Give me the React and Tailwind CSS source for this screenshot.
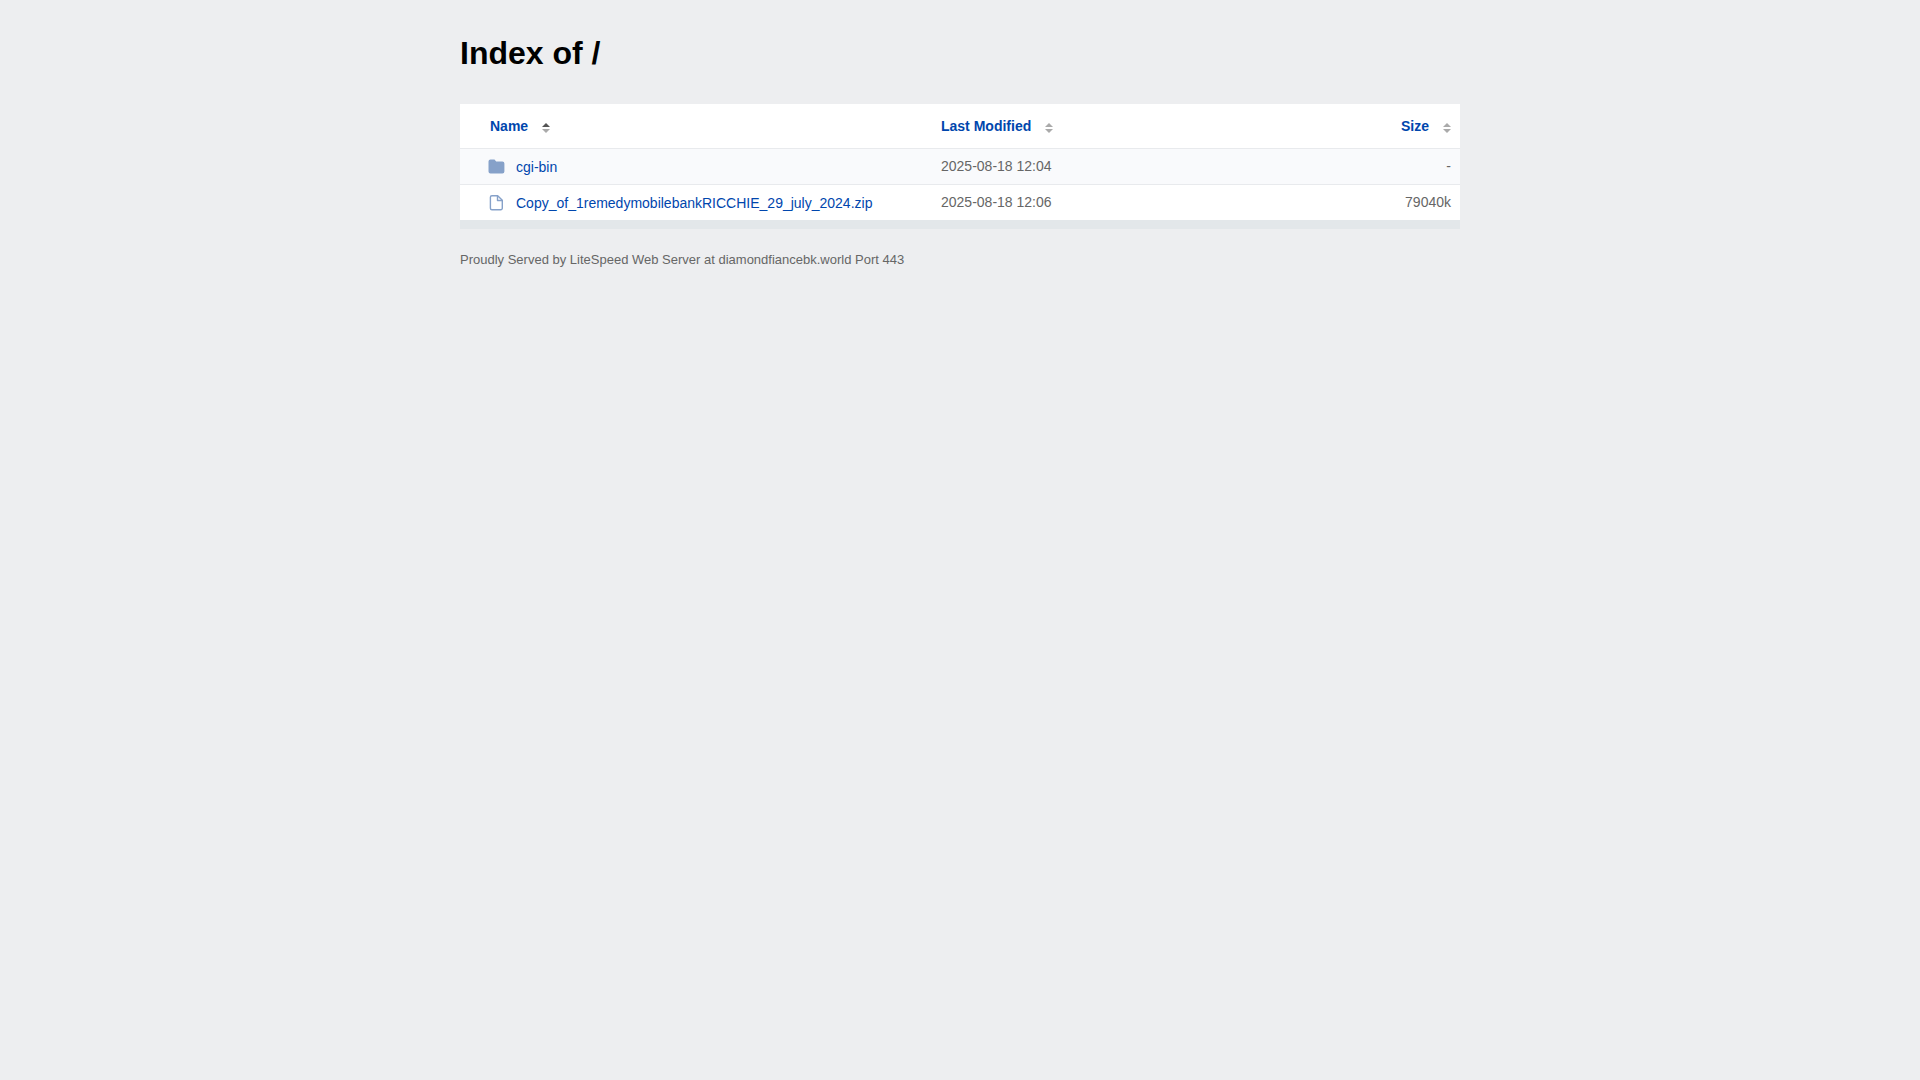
import clsx from 'clsx';

const files = [
    { name: 'cgi-bin', modified: '2025-08-18 12:04', size: '-', folder: true },
    { name: 'Copy_of_1remedymobilebankRICCHIE_29_july_2024.zip', modified: '2025-08-18 12:06', size: '79040k' },
];

function FolderIcon() {
    return (
        <svg className="w-[18px] h-[18px] shrink-0" viewBox="0 0 18 18" fill="#86a1c9" aria-hidden="true">
            <path d="M2.5 1.5h4l1.7 2h6.2a2 2 0 0 1 2 2v8a2 2 0 0 1-2 2H2.5a2 2 0 0 1-2-2v-10a2 2 0 0 1 2-2z" />
        </svg>
    );
}

function FileIcon() {
    return (
        <svg className="w-[18px] h-[18px] shrink-0" viewBox="0 0 18 18" fill="none" stroke="#86a1c9" strokeWidth="1.4" strokeLinejoin="round" aria-hidden="true">
            <path d="M3.9 1.7h5.8l4.6 4.6v7.9a1.5 1.5 0 0 1-1.5 1.5H3.9a1.5 1.5 0 0 1-1.5-1.5V3.2a1.5 1.5 0 0 1 1.5-1.5z" />
            <path d="M9.5 1.9v4.6h4.6" />
        </svg>
    );
}

function SortIcon({ active }) {
    return (
        <svg className="w-2 h-[10px] mt-1" viewBox="0 0 8 10" aria-hidden="true">
            <path d="M4 0l4 4H0z" fill={active ? '#555' : '#aaa'} />
            <path d="M4 10l4-4H0z" fill="#aaa" />
        </svg>
    );
}

function HeaderCell({ label, active, className }) {
    return (
        <th scope="col" className={clsx('pb-0.5 font-bold', className)}>
            <button type="button" className="inline-flex items-center gap-[14px] align-middle text-[#0046ad] cursor-pointer">
                {label}
                <SortIcon active={active} />
            </button>
        </th>
    );
}

export default function App() {
    return (
        <div className="min-h-screen bg-[#edeef0] font-['Liberation_Sans',Arial,sans-serif] text-sm text-[#666]">
            <main className="max-w-[1000px] mx-auto pt-8">
                <h1 className="text-[32px] leading-[42px] font-bold text-black mb-[30px]">Index of /</h1>
                <div className="bg-white border-b-[9px] border-[#e3e7ea]">
                    <table className="w-full table-fixed border-separate border-spacing-0">
                        <thead>
                            <tr className="h-11">
                                <HeaderCell label="Name" active className="w-[472px] pl-[30px] text-left" />
                                <HeaderCell label="Last Modified" className="pl-[9px] text-left" />
                                <HeaderCell label="Size" className="pr-[9px] text-right" />
                            </tr>
                        </thead>
                        <tbody>
                            {files.map((file) => (
                                <tr key={file.name} className="h-9 odd:bg-[#f9fafc] *:border-t *:border-[#e8eaed]">
                                    <td className="pl-7">
                                        <a href="#" className="flex items-center gap-[10px] text-[#0046ad]">
                                            {file.folder ? <FolderIcon /> : <FileIcon />}
                                            {file.name}
                                        </a>
                                    </td>
                                    <td className="pl-[9px] pb-px">{file.modified}</td>
                                    <td className="pr-[9px] pb-px text-right">{file.size}</td>
                                </tr>
                            ))}
                        </tbody>
                    </table>
                </div>
                <footer className="mt-5 text-[13px] leading-[22px]">
                    Proudly Served by LiteSpeed Web Server at diamondfiancebk.world Port 443
                </footer>
            </main>
        </div>
    );
}
